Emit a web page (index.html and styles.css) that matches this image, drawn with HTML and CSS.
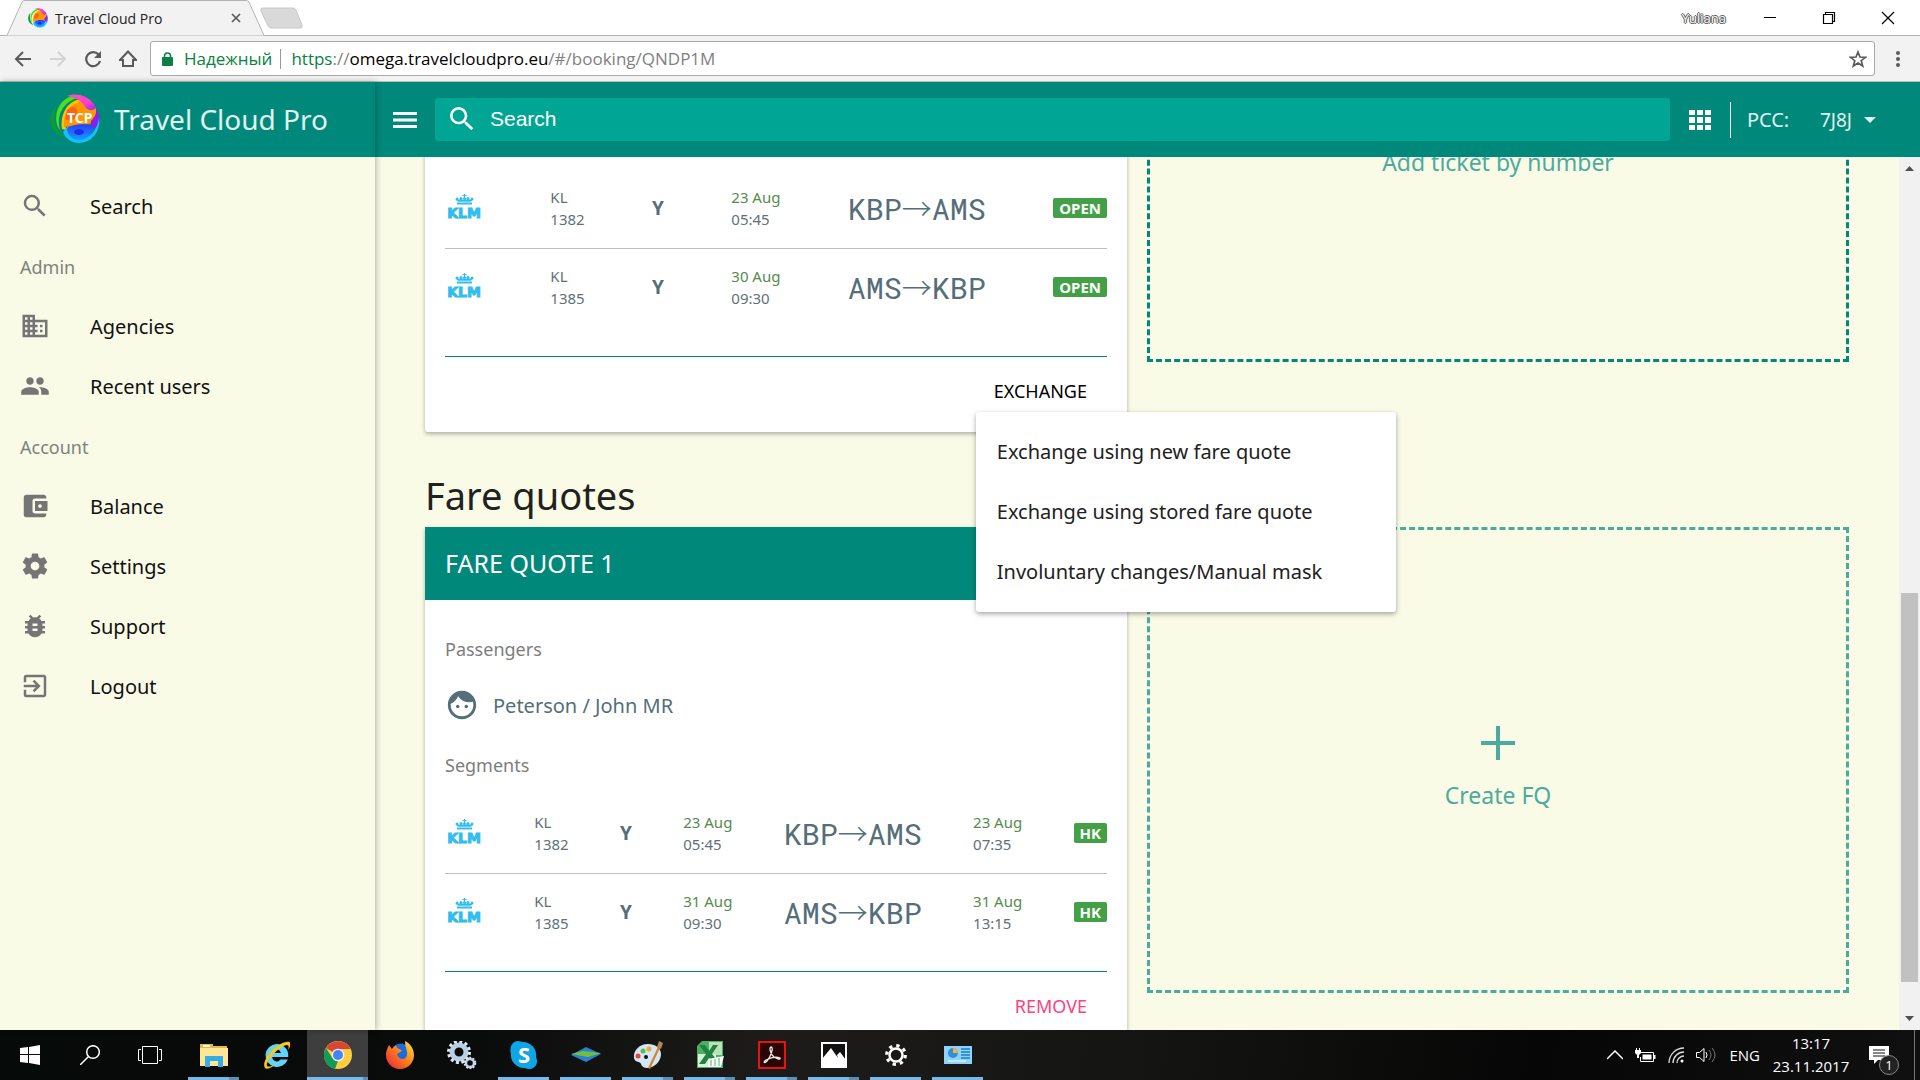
FILE: index.html
```html
<!DOCTYPE html>
<html lang="en">
<head>
<meta charset="utf-8">
<title>Travel Cloud Pro</title>
<link rel="stylesheet" href="styles.css">
</head>
<body>
<svg class="defs" aria-hidden="true">
  <defs>
    <linearGradient id="g-pink" x1="0" y1="0" x2="1" y2="1"><stop offset="0" stop-color="#ff4fb4"/><stop offset=".6" stop-color="#ff3fd0"/><stop offset="1" stop-color="#8a2df5"/></linearGradient>
    <linearGradient id="g-blue" x1="0" y1="0" x2="0" y2="1"><stop offset="0" stop-color="#2f3cff"/><stop offset="1" stop-color="#12a0ff"/></linearGradient>
    <linearGradient id="g-fox" x1="1" y1="0" x2="0" y2="1"><stop offset="0" stop-color="#ffe93c"/><stop offset=".5" stop-color="#ff7a1a"/><stop offset="1" stop-color="#e5203f"/></linearGradient>
    <symbol id="tcp" viewBox="0 0 50 50">
      <path d="M6 12C-3 22-2 38 14 43 6 36 3 26 6 12z" fill="#0c9a3a"/>
      <path d="M28 1C12 1 2 18 8 33l3 5C5 23 12 7 31 3z" fill="#4be01a"/>
      <path d="M30 5C17 8 10 20 12 35l4 1c-2-12 4-24 18-28z" fill="#ffc400"/>
      <path d="M32 8C19 9 13 21 14 33l32-4V14z" fill="#ff9500"/>
      <path d="M17 16c5-5 11-4 10 3s-7 9-12 6z" fill="#ff6210"/>
      <path d="M17 2c10-4 24 0 29 12-5 4-9 2-12-3-4-5-9-8-17-9z" fill="url(#g-pink)"/>
      <path d="M46 14c5 9 4 16 1 21-4-1-7-3-6-8 4-4 6-8 5-13z" fill="#8a1df0"/>
      <path d="M49 24c2 14-8 25-20 25-8 0-14-5-16-11l5-6c0 8 5 13 12 13 9 0 17-8 19-21z" fill="#14c0ff"/>
      <path d="M17 35c3-6 24-6 27-2-2 8-8 13-15 13-6 0-11-4-12-11z" fill="url(#g-blue)"/>
      <ellipse cx="29" cy="38" rx="5" ry="3" fill="#1b2ee8"/>
    </symbol>
    <symbol id="i-search" viewBox="0 0 24 24"><path d="M15.5 14h-.79l-.28-.27A6.47 6.47 0 0 0 16 9.5 6.5 6.5 0 1 0 9.500 16c1.610 0 3.090-.59 4.230-1.570l.27.28v.79l5 4.990L20.490 19l-4.990-5zm-6 0C7.010 14 5 11.990 5 9.500S7.010 5 9.500 5 14 7.010 14 9.500 11.990 14 9.500 14z"/></symbol>
    <symbol id="klm" viewBox="0 0 38 32">
      <g fill="#33bdee"><path d="M12 10.500h15v2H12zM11 7.500l2 2.300h13l2-2.300zM19 2h1v1h1.500v1H20v3h-1V4h-1.500V3H19z"/><circle cx="12" cy="7" r="1.500"/><circle cx="16" cy="6.500" r="1.500"/><circle cx="19.500" cy="6.500" r="1.500"/><circle cx="23" cy="6.500" r="1.500"/><circle cx="27" cy="7" r="1.500"/></g>
      <text x="19" y="26" text-anchor="middle" class="klm-text">KLM</text>
    </symbol>
  </defs>
</svg>

<div class="browser">
  <div class="tabstrip">
    <div class="tab">
      <svg class="tab-shape" viewBox="0 0 266 36" preserveAspectRatio="none"><path d="M0 35.500h7L22 2q1-1.500 3-1.500h221q2 0 3 1.500l15 33.500h2" fill="#f2f2f2" stroke="#b3b3b3"/></svg>
      <svg class="tab-icon"><use href="#tcp"/></svg>
      <span class="tab-title">Travel Cloud Pro</span>
      <button class="plain tab-close" aria-label="Close tab"><svg width="10" height="10" viewBox="0 0 10 10"><path d="M1 1l8 8M9 1l-8 8" stroke="#5a5a5a" stroke-width="1.700"/></svg></button>
    </div>
    <button class="plain new-tab" aria-label="New tab"><svg width="44" height="22" viewBox="0 0 44 22"><path d="M3 1h30q2 0 3 2l6 15q1 3-2 3H11q-2 0-3-2L1 4q-1-3 2-3z" fill="#d9d9d9" stroke="#c8c8c8"/></svg></button>
    <div class="window-buttons">
      <span class="profile">Yuliana</span>
      <button class="plain" aria-label="Minimize"><svg width="14" height="14"><path d="M1 6.500h12" stroke="#000"/></svg></button>
      <button class="plain" aria-label="Restore"><svg width="14" height="14" fill="none"><path d="M1.500 3.500h9v9h-9zM3.500 3.500v-2h9v9h-2" stroke="#000" stroke-width="1.200"/></svg></button>
      <button class="plain" aria-label="Close"><svg width="14" height="14"><path d="M1 1l12 12M13 1L1 13" stroke="#000" stroke-width="1.200"/></svg></button>
    </div>
  </div>
  <div class="toolbar">
    <button class="plain nav-btn" aria-label="Back"><svg width="18" height="18" fill="none" stroke="#5a5a5a" stroke-width="2"><path d="M17 9H2M9 2L2 9l7 7"/></svg></button>
    <button class="plain nav-btn" aria-label="Forward" disabled><svg width="18" height="18" fill="none" stroke="#d3d3d3" stroke-width="2"><path d="M1 9h15M9 2l7 7-7 7"/></svg></button>
    <button class="plain nav-btn" aria-label="Reload"><svg width="18" height="18"><path d="M14.500 4.500A7 7 0 1 0 16 11" fill="none" stroke="#5a5a5a" stroke-width="2.200"/><path d="M17 1v7h-7z" fill="#5a5a5a"/></svg></button>
    <button class="plain nav-btn" aria-label="Home"><svg width="18" height="18" fill="none" stroke="#5a5a5a" stroke-width="2"><path d="M1 10l8-8.500 8 8.500h-3v6H4v-6z"/></svg></button>
    <div class="omnibox">
      <svg class="lock" width="11" height="14" viewBox="0 0 11 14"><path d="M2.500 6V4a3 3 0 0 1 6 0v2" fill="none" stroke="#0b8043" stroke-width="1.500"/><rect y="5" width="11" height="9" rx="1" fill="#0b8043"/></svg>
      <span class="secure">Надежный</span>
      <span class="url"><span class="scheme">https</span>://<span class="host">omega.travelcloudpro.eu</span>/#/booking/QNDP1M</span>
      <button class="plain star" aria-label="Bookmark"><svg width="18" height="18" viewBox="0 0 18 18"><path d="M9 2l2 5 5.500.300-4.300 3.400 1.500 5.300L9 13l-4.700 3 1.500-5.300L1.500 7.300 7 7z" fill="none" stroke="#5a5a5a" stroke-width="1.700"/></svg></button>
    </div>
    <button class="plain kebab" aria-label="Menu"><svg width="4" height="18"><g fill="#5a5a5a"><circle cx="2" cy="3" r="2"/><circle cx="2" cy="9" r="2"/><circle cx="2" cy="15" r="2"/></g></svg></button>
  </div>
</div>

<div class="app">
  <aside class="sidebar">
    <div class="brand"><span class="brand-logo"><svg><use href="#tcp"/></svg><span class="brand-mark">TCP</span></span><span>Travel Cloud Pro</span></div>
    <nav class="menu">
      <a href="#search"><svg><use href="#i-search"/></svg>Search</a>
      <h2>Admin</h2>
      <a href="#agencies"><svg viewBox="0 0 24 24"><path d="M12 7V3H2v18h20V7H12zM6 19H4v-2h2v2zm0-4H4v-2h2v2zm0-4H4V9h2v2zm0-4H4V5h2v2zm4 12H8v-2h2v2zm0-4H8v-2h2v2zm0-4H8V9h2v2zm0-4H8V5h2v2zm10 12h-8v-2h2v-2h-2v-2h2v-2h-2V9h8v10zm-2-8h-2v2h2v-2zm0 4h-2v2h2v-2z"/></svg>Agencies</a>
      <a href="#users"><svg viewBox="0 0 24 24"><path d="M16 11c1.660 0 2.990-1.340 2.990-3S17.660 5 16 5s-3 1.340-3 3 1.340 3 3 3zm-8 0c1.660 0 2.990-1.340 2.990-3S9.660 5 8 5 5 6.340 5 8s1.340 3 3 3zm0 2c-2.330 0-7 1.170-7 3.500V19h14v-2.500C15 14.170 10.330 13 8 13zm8 0c-.29 0-.62.02-.97.05 1.160.84 1.970 1.970 1.970 3.450V19h6v-2.500c0-2.330-4.670-3.500-7-3.500z"/></svg>Recent users</a>
      <h2>Account</h2>
      <a href="#balance"><svg viewBox="0 0 24 24"><path d="M21 18v1c0 1.100-.9 2-2 2H5c-1.110 0-2-.9-2-2V5c0-1.100.89-2 2-2h14c1.100 0 2 .9 2 2v1h-9c-1.110 0-2 .9-2 2v8c0 1.100.89 2 2 2h9zm-9-2h10V8H12v8zm4-2.500c-.83 0-1.500-.67-1.500-1.500s.67-1.500 1.500-1.500 1.500.67 1.500 1.500-.67 1.500-1.500 1.500z"/></svg>Balance</a>
      <a href="#settings"><svg viewBox="0 0 24 24"><path d="M19.430 12.980c.04-.32.07-.64.07-.98s-.03-.66-.07-.98l2.110-1.650c.19-.15.24-.42.12-.64l-2-3.460c-.12-.22-.39-.3-.61-.22l-2.490 1c-.52-.4-1.080-.73-1.690-.98l-.38-2.650A.488.488 0 0 0 14 2h-4c-.25 0-.46.18-.49.42l-.38 2.650c-.61.25-1.170.59-1.690.98l-2.490-1c-.23-.09-.49 0-.61.22l-2 3.460c-.13.22-.07.49.12.64l2.110 1.650c-.04.32-.07.65-.07.98s.03.66.07.98l-2.110 1.650c-.19.15-.24.42-.12.64l2 3.460c.12.22.39.3.61.22l2.490-1c.52.4 1.080.73 1.690.98l.38 2.650c.03.24.24.42.49.42h4c.25 0 .46-.18.49-.42l.38-2.650c.61-.25 1.170-.59 1.690-.98l2.490 1c.23.09.49 0 .61-.22l2-3.460c.12-.22.07-.49-.12-.64l-2.110-1.650zM12 15.500c-1.930 0-3.500-1.570-3.500-3.500s1.570-3.500 3.500-3.500 3.500 1.570 3.500 3.500-1.570 3.500-3.500 3.500z"/></svg>Settings</a>
      <a href="#support"><svg viewBox="0 0 24 24"><path d="M20 8h-2.810c-.45-.78-1.070-1.450-1.820-1.960L17 4.410 15.590 3l-2.170 2.170C12.960 5.060 12.490 5 12 5c-.49 0-.96.06-1.410.17L8.410 3 7 4.410l1.620 1.630C7.880 6.550 7.260 7.220 6.810 8H4v2h2.090c-.05.33-.09.66-.09 1v1H4v2h2v1c0 .34.04.67.09 1H4v2h2.810c1.040 1.790 2.970 3 5.190 3s4.150-1.210 5.190-3H20v-2h-2.090c.05-.33.09-.66.09-1v-1h2v-2h-2v-1c0-.34-.04-.67-.09-1H20V8zm-6 8h-4v-2h4v2zm0-4h-4v-2h4v2z"/></svg>Support</a>
      <a href="#logout"><svg viewBox="0 0 24 24"><path d="M10.090 15.590L11.500 17l5-5-5-5-1.410 1.410L12.670 11H3v2h9.670l-2.580 2.590zM19 3H5a2 2 0 0 0-2 2v4h2V5h14v14H5v-4H3v4a2 2 0 0 0 2 2h14c1.100 0 2-.9 2-2V5c0-1.100-.9-2-2-2z"/></svg>Logout</a>
    </nav>
  </aside>

  <div class="page">
    <header class="appbar">
      <button class="plain" aria-label="Toggle menu"><svg width="24" height="16"><path d="M0 1.500h24M0 8h24M0 14.500h24" stroke="#fff" stroke-width="3"/></svg></button>
      <label class="searchbox"><svg><use href="#i-search"/></svg><input type="text" placeholder="Search" aria-label="Search"></label>
      <button class="plain" aria-label="Apps"><svg width="22" height="20" fill="#fff"><path d="M0 0h6v5H0zM8 0h6v5H8zM16 0h6v5h-6zM0 7h6v6H0zM8 7h6v6H8zM16 7h6v6h-6zM0 15h6v5H0zM8 15h6v5H8zM16 15h6v5h-6z"/></svg></button>
      <span class="divider"></span>
      <span class="pcc">PCC:</span>
      <button class="plain pcc-value">7J8J <svg width="12" height="6"><path d="M0 0h12L6 6z" fill="#e0f2ef"/></svg></button>
    </header>

    <div class="viewport">
      <main class="content">
        <section class="pair tickets">
          <article class="card ticket">
            <table class="segments">
              <tbody>
                <tr><td><svg class="klm"><use href="#klm"/></svg></td><td>KL<br>1382</td><td class="cls">Y</td><td><span class="date">23 Aug</span><br>05:45</td><td class="route">KBP<span class="arrow">→</span>AMS</td><td><span class="badge">OPEN</span></td></tr>
                <tr><td><svg class="klm"><use href="#klm"/></svg></td><td>KL<br>1385</td><td class="cls">Y</td><td><span class="date">30 Aug</span><br>09:30</td><td class="route">AMS<span class="arrow">→</span>KBP</td><td><span class="badge">OPEN</span></td></tr>
              </tbody>
            </table>
            <footer class="actions wide">
              <div class="dropdown">
                <button class="plain action" aria-expanded="true">EXCHANGE</button>
                <div class="popup" role="menu">
                  <button class="plain" role="menuitem">Exchange using new fare quote</button>
                  <button class="plain" role="menuitem">Exchange using stored fare quote</button>
                  <button class="plain" role="menuitem">Involuntary changes/Manual mask</button>
                </div>
              </div>
            </footer>
          </article>
          <button class="plain placeholder current"><svg width="34" height="34"><path d="M17 0v34M0 17h34" stroke="currentColor" stroke-width="4"/></svg>Add ticket by number</button>
        </section>

        <h1>Fare quotes</h1>
        <section class="pair">
          <article class="card">
            <h2 class="card-title">FARE QUOTE 1</h2>
            <div class="details">
              <h3>Passengers</h3>
              <p class="person"><svg viewBox="0 0 24 24"><path d="M9 11.750a1.250 1.250 0 1 0 0 2.500 1.250 1.250 0 0 0 0-2.500zm6 0a1.250 1.250 0 1 0 0 2.500 1.250 1.250 0 0 0 0-2.500zM12 2C6.480 2 2 6.480 2 12s4.480 10 10 10 10-4.480 10-10S17.520 2 12 2zm0 18c-4.410 0-8-3.590-8-8 0-.29.02-.58.05-.86 2.360-1.050 4.230-2.980 5.210-5.370a9.974 9.974 0 0 0 10.410 3.970c.21.71.33 1.470.33 2.260 0 4.410-3.590 8-8 8z"/></svg>Peterson / John MR</p>
              <h3>Segments</h3>
            </div>
            <table class="segments">
              <tbody>
                <tr><td><svg class="klm"><use href="#klm"/></svg></td><td>KL<br>1382</td><td class="cls">Y</td><td><span class="date">23 Aug</span><br>05:45</td><td class="route">KBP<span class="arrow">→</span>AMS</td><td><span class="date">23 Aug</span><br>07:35</td><td><span class="badge">HK</span></td></tr>
                <tr><td><svg class="klm"><use href="#klm"/></svg></td><td>KL<br>1385</td><td class="cls">Y</td><td><span class="date">31 Aug</span><br>09:30</td><td class="route">AMS<span class="arrow">→</span>KBP</td><td><span class="date">31 Aug</span><br>13:15</td><td><span class="badge">HK</span></td></tr>
              </tbody>
            </table>
            <footer class="actions"><button class="plain action remove">REMOVE</button></footer>
          </article>
          <button class="plain placeholder"><svg width="34" height="34"><path d="M17 0v34M0 17h34" stroke="currentColor" stroke-width="4"/></svg>Create FQ</button>
        </section>
      </main>
      <div class="scrollbar">
        <svg width="9" height="5"><path d="M0 5l4.500-5L9 5z" fill="#505050"/></svg>
        <div class="track"><div class="thumb"></div></div>
        <svg width="9" height="5"><path d="M0 0l4.500 5L9 0z" fill="#505050"/></svg>
      </div>
    </div>
  </div>
</div>

<div class="taskbar">
  <button class="plain sys" aria-label="Start"><svg width="20" height="20" fill="#fff"><path d="M0 3l8-1v7H0zM9 2l11-2v9H9zM0 10h8v8l-8-1zM9 10h11v10L9 18z"/></svg></button>
  <button class="plain sys" aria-label="Search"><svg width="20" height="20" fill="none" stroke="#fff" stroke-width="1.500"><circle cx="13" cy="7" r="6.300"/><path d="M8.500 11.500L0 20"/></svg></button>
  <button class="plain sys" aria-label="Task view"><svg width="24" height="20" fill="none" stroke="#fff"><path d="M4.500 1.500h15v17h-15zM3 4.500H.5v11H3M21 4.500h2.500v11H21"/></svg></button>
  <div class="apps">
    <button class="plain open many" aria-label="Explorer"><svg width="28" height="28" viewBox="0 0 28 28"><path d="M0 3h13v2h14v20H0z" fill="#e8b93f"/><path d="M0 7h28v18H0z" fill="#ffe694"/><path d="M3 4h7v2H3z" fill="#fff"/><path d="M5 15h18v11h-5v-6h-8v6H5z" fill="#35aee8"/></svg></button>
    <button class="plain" aria-label="Internet Explorer"><svg width="28" height="28" viewBox="0 0 28 28"><path d="M14.500 3a11.500 11.500 0 1 0 11.300 15.500H18.500a4.600 4.600 0 0 1-8.300-2.500h16A11.500 11.500 0 0 0 14.500 3zM10.200 12a4.400 4.400 0 0 1 8.600 0z" fill="#60d4fa"/><path d="M3 27C-2 20 17-1 27 1c3 1 1 5-1 8 1-3 1-5-1-5C18 4 3 21 5 25c3 2 9-2 11-4C12 26 5 29 3 27z" fill="#f9c71e"/></svg></button>
    <button class="plain open many active" aria-label="Chrome"><svg width="28" height="28" viewBox="0 0 28 28"><circle cx="14" cy="14" r="14" fill="#ffcd40"/><path d="M14 14L2 7A14 14 0 0 1 26.500 8H14z" fill="#db4437"/><path d="M2 7l7 11 5 2-3 8A14 14 0 0 1 2 7z" fill="#0f9d58"/><circle cx="14" cy="14" r="6.300" fill="#f1f1f1"/><circle cx="14" cy="14" r="5" fill="#4285f4"/></svg></button>
    <button class="plain" aria-label="Firefox"><svg width="28" height="28" viewBox="0 0 28 28"><circle cx="15" cy="13" r="10.500" fill="#1a6be0"/><path d="M3 4l3 4 4-4c0 4 5 4 6 6l-5 3c1 6 9 7 10 1 1-4-2-7-2-14 5 2 9 8 9 14a14 14 0 0 1-28 0C0 10 1 8 3 4z" fill="url(#g-fox)"/></svg></button>
    <button class="plain" aria-label="Services"><svg width="30" height="28" viewBox="0 0 30 28" fill="none"><circle cx="12" cy="11" r="7" stroke="#b9cfe4" stroke-width="5"/><circle cx="12" cy="11" r="10.500" stroke="#dce8f2" stroke-width="3" stroke-dasharray="3 2.500"/><circle cx="23" cy="22" r="4" stroke="#c5d6e6" stroke-width="2.500"/><circle cx="23" cy="22" r="5.500" stroke="#dce8f2" stroke-width="1.500" stroke-dasharray="2 1.500"/></svg></button>
    <button class="plain open" aria-label="Skype"><svg width="28" height="28" viewBox="0 0 28 28"><path d="M8 0c2 0 4 1 5 1a13 13 0 0 1 13 15c3 6-1 12-7 12-2 0-4-1-5-1A13 13 0 0 1 1 13C-1 7 2 0 8 0z" fill="#0fa5e6"/><text x="14" y="22" text-anchor="middle" class="skype-s">S</text></svg></button>
    <button class="plain open" aria-label="Layers"><svg width="30" height="16" viewBox="0 0 30 16"><path d="M15 0l15 7-15 8L0 8z" fill="#2c7fd1"/><path d="M0 7l12-3 18 2-13 4z" fill="#6fc13a"/></svg></button>
    <button class="plain open many" aria-label="Paint"><svg width="30" height="28" viewBox="0 0 30 28"><path d="M15 3C6 3 0 10 1 17c1 5 6 3 7 6 1 4 6 5 11 3 6-3 9-8 9-13 0-6-6-10-13-10z" fill="#d2e6f5"/><circle cx="5" cy="15" r="2.500" fill="#e24343"/><circle cx="10" cy="10" r="2.500" fill="#5fb94a"/><circle cx="16" cy="8" r="2.500" fill="#f5a623"/><circle cx="13" cy="16" r="2" fill="#111"/><path d="M25 6l2 1-10 21-2-1z" fill="#d9822b"/><path d="M24 6l2-6 4 2-2 6z" fill="#b58355"/></svg></button>
    <button class="plain open many" aria-label="Excel"><svg width="28" height="28" viewBox="0 0 28 28"><path d="M1 5l5-5h21v27H1z" fill="#4caf61"/><path d="M13 1h13v13H13z" fill="#b9e2b8"/><path d="M2 13h18v13H2z" fill="#d9efd9"/><path d="M3 4h6l4 6 4-6h5l-6 9 8 10h-6l-5-6-4 6H3l7-10z" fill="#1e8440"/><path d="M12 18l16-3-3 11H12z" fill="#fff"/><path d="M15 19v6M19 18v7M23 17v8" stroke="#4caf61"/></svg></button>
    <button class="plain open many" aria-label="Acrobat"><svg width="28" height="28" viewBox="0 0 28 28"><path d="M1 1h26v26H1z" fill="#2b0606" stroke="#e5160c" stroke-width="2"/><path d="M13 6c3 0 0 9-4 14-3 3-4 1-1-1 4-2 10-4 14-2 1 2-3 1-6-1-4-3-5-10-3-10z" fill="none" stroke="#eee" stroke-width="1.300"/></svg></button>
    <button class="plain open many" aria-label="Photos"><svg width="26" height="26" viewBox="0 0 26 26"><path d="M1 1h24v24H1z" fill="#111" stroke="#fff" stroke-width="2"/><path d="M1 17l9-11 7 10-1-3 3-3 6 8v7H1z" fill="#fff"/></svg></button>
    <button class="plain open" aria-label="Settings"><svg width="22" height="22" viewBox="0 0 22 22" fill="none" stroke="#fff"><circle cx="11" cy="11" r="6.500" stroke-width="2.500"/><circle cx="11" cy="11" r="9.300" stroke-width="3.200" stroke-dasharray="3.300 4"/></svg></button>
    <button class="plain open" aria-label="Control panel"><svg width="28" height="18" viewBox="0 0 28 18"><path d="M0 0h28v18H0z" fill="#8ed3f9"/><circle cx="9" cy="7" r="5" fill="#2f8fd8"/><path d="M9 7V2a5 5 0 0 1 5 5z" fill="#ffb03a"/><path d="M17 3h9M17 6h9M17 9h9M17 12h9" stroke="#1e7dc7" stroke-width="1.500"/><path d="M4 15h18" stroke="#fff"/></svg></button>
  </div>
  <div class="tray">
    <svg width="16" height="10" fill="none" stroke="#fff" stroke-width="1.500"><path d="M0 9l8-8 8 8"/></svg>
    <svg width="21" height="15" viewBox="0 0 21 15"><path d="M6 4.500h12.500v9H5.500V9" fill="none" stroke="#fff"/><path d="M7.500 6.500h9v5h-9z" fill="#fff"/><path d="M19 7h1.500v4H19zM0 2h6v3L4 7v3H2V7L0 5zM1 0h1v2H1zM4 0h1v2H4z" fill="#fff"/></svg>
    <svg width="16" height="16" viewBox="0 0 16 16" fill="none" stroke="#ddd" stroke-width="1.300"><path d="M1 16A15 15 0 0 1 16 1M5 16A11 11 0 0 1 16 5M9 16a7 7 0 0 1 7-7"/><circle cx="14" cy="14" r="1.500" fill="#fff" stroke="none"/></svg>
    <svg width="21" height="16" viewBox="0 0 21 16" fill="none" stroke="#fff"><path d="M.5 5.500h3L8 1.500v13L3.500 10.500h-3z"/><path d="M10 5q2 3 0 6" /><path d="M13 3q4 5 0 10M16 1q6 7 0 14" stroke="#777"/></svg>
    <span>ENG</span>
    <time class="clock">13:17<br>23.11.2017</time>
    <button class="plain notes" aria-label="Notifications"><svg width="20" height="18"><path d="M0 0h20v14H9l-4 4v-4H0z" fill="#fff"/><path d="M4 4h12M4 7h12M4 10h12" stroke="#111"/></svg><span class="count">1</span></button>
  </div>
</div>
</body>
</html>
```
FILE: styles.css
```css
* { box-sizing: border-box; }

body {
  margin: 0;
  height: 100vh;
  display: flex;
  flex-direction: column;
  overflow: hidden;
  font-family: "Noto Sans", sans-serif;
  font-size: 20px;
  color: #212121;
  background: #f9fbe7;
}

h1, h2, h3, p { margin: 0; font-weight: 400; }
svg { display: block; flex: none; }
.defs { position: absolute; width: 0; height: 0; }

.plain {
  border: 0;
  padding: 0;
  background: none;
  color: inherit;
  font: inherit;
  display: flex;
  align-items: center;
  justify-content: center;
}

/* Browser window */
.browser { flex: none; background: #f2f2f2; font-family: "Open Sans", sans-serif; }
.tabstrip {
  height: 36px;
  display: flex;
  background: #fff;
  border-bottom: 1px solid #b3b3b3;
}
.tab {
  position: relative;
  width: 266px;
  height: 36px;
  display: flex;
  align-items: center;
  padding: 0 25px 0 28px;
  font-size: 14px;
  color: #222;
}
.tab-shape { position: absolute; inset: 0; width: 100%; height: 100%; }
.tab-icon { position: relative; width: 20px; height: 20px; margin-right: 7px; }
.tab-title { position: relative; flex: 1; }
.tab-close { position: relative; }
.new-tab { margin-left: -6px; }
.window-buttons { margin-left: auto; padding-right: 3px; display: flex; align-items: center; }
.window-buttons button { width: 59px; height: 32px; }
.profile {
  margin-right: 14px;
  font-size: 13px;
  color: #fff;
  text-shadow: 1px 0 #555, -1px 0 #555, 0 1px #555, 0 -1px #555;
}
.toolbar {
  height: 46px;
  display: flex;
  align-items: center;
  padding: 0 20px 0 5px;
  border-bottom: 1px solid #bcbcbc;
}
.nav-btn { width: 35px; height: 35px; }
.omnibox {
  flex: 1;
  height: 35px;
  margin: 0 21px 0 5px;
  display: flex;
  align-items: center;
  padding: 0 7px 0 11px;
  background: #fff;
  border: 1px solid #a9a9a9;
  border-radius: 3px;
  font-size: 17px;
}
.secure {
  margin-left: 11px;
  padding-right: 8px;
  margin-right: 10px;
  line-height: 20px;
  color: #0b8043;
  border-right: 1px solid #999;
}
.url { flex: 1; color: #808080; }
.scheme { color: #0b8043; }
.host { color: #000; }

/* Application */
.app { flex: 1; min-height: 0; display: flex; }
.sidebar {
  position: relative;
  z-index: 1;
  width: 375px;
  flex: none;
  background: #f9fbe7;
  box-shadow: 1px 0 6px rgba(0, 0, 0, .3);
}
.brand {
  height: 75px;
  display: flex;
  align-items: center;
  gap: 14px;
  padding: 0 0 2px 50px;
  background: #00897b;
  color: #e0f2ef;
  font-size: 28px;
}
.brand-logo { position: relative; width: 50px; height: 50px; }
.brand-logo svg { width: 50px; height: 50px; }
.brand-mark {
  position: absolute;
  inset: 0;
  left: 17px;
  line-height: 48px;
  color: #fff;
  font-size: 14px;
  font-weight: 700;
}
.menu { padding-top: 20px; }
.menu a {
  height: 60px;
  display: flex;
  align-items: center;
  gap: 40px;
  padding: 0 0 2px 20px;
  color: #111;
  text-decoration: none;
}
.menu svg { width: 30px; height: 30px; fill: #757575; }
.menu h2 { padding-left: 20px; font-size: 18px; line-height: 60px; color: #80827a; }

.page { flex: 1; min-width: 0; display: flex; flex-direction: column; }
.appbar {
  height: 75px;
  flex: none;
  display: flex;
  align-items: center;
  padding: 0 44px 0 18px;
  background: #00897b;
  color: #e0f2ef;
}
.searchbox {
  flex: 1;
  height: 43px;
  margin: 0 19px 0 18px;
  display: flex;
  align-items: center;
  gap: 12px;
  padding: 0 0 2px 11px;
  border-radius: 3px;
  background: #00a594;
}
.searchbox svg { width: 32px; height: 32px; fill: #fff; }
.searchbox input {
  flex: 1;
  padding: 0;
  border: 0;
  background: none;
  outline: 0;
  font: 21px "Liberation Sans", sans-serif;
  color: #fff;
}
.searchbox input::placeholder { color: #fff; opacity: 1; }
.divider { width: 1px; height: 36px; margin: 0 16px 0 19px; background: #fff; }
.pcc { width: 73px; }
.pcc-value { gap: 12px; font-size: 19px; }

.viewport { flex: 1; min-height: 0; display: flex; }
.content { flex: 1; min-width: 0; padding: 0 50px; overflow: hidden; }
.scrollbar {
  width: 21px;
  display: flex;
  flex-direction: column;
  align-items: center;
  padding: 9px 0;
  background: #f1f1f1;
}
.track { flex: 1; width: 17px; display: flex; flex-direction: column; justify-content: flex-end; padding-bottom: 34px; }
.thumb { height: 48%; background: #c1c1c1; }

.pair { display: grid; grid-template-columns: 1fr 1fr; gap: 20px; align-items: start; }
/* the list is scrolled down, so its first row starts above the fold */
.tickets { margin-top: -265px; }
.card {
  min-width: 0;
  background: #fff;
  border-radius: 3px;
  box-shadow: 0 2px 4px rgba(0, 0, 0, .3);
}
.ticket { min-height: 540px; display: flex; flex-direction: column; justify-content: flex-end; }
.card-title { padding: 0 20px; line-height: 73px; font-size: 25px; color: #fff; background: #00897b; }
.details { padding: 21px 20px 2px; }
h1 { margin-top: 33px; padding-bottom: 2px; font-size: 38px; line-height: 60px; }
h3 { font-size: 18px; line-height: 56px; color: #7d7d7d; }
.person {
  height: 56px;
  margin-bottom: 4px;
  display: flex;
  align-items: center;
  gap: 14px;
  color: #546e7a;
}
.person svg { width: 34px; height: 34px; fill: #546e7a; }

.segments { display: block; padding: 0 20px; font-size: 15px; line-height: 22px; color: #5f7079; }
.segments tbody { display: block; }
.segments tr { height: 78px; display: flex; align-items: center; justify-content: space-between; }
.segments tr:first-child { height: 79px; border-bottom: 1px solid #bdbdbd; }
.segments td { padding: 0 0 2px; }
.klm { width: 38px; height: 32px; }
.klm-text { font: 700 14px "DejaVu Sans", sans-serif; fill: #33bdee; stroke: #33bdee; stroke-width: 1px; }
.segments .cls { font-size: 19px; font-weight: 700; color: #546e7a; }
.date { color: #558b4f; }
.segments .route { padding: 0; font: 30px/36px "Roboto Mono", "Liberation Mono", monospace; color: #546e7a; }
.arrow { font-family: "Noto Sans CJK SC", sans-serif; font-weight: 300; line-height: 30px; }
.badge {
  display: block;
  padding: 0 6px;
  border-radius: 2px;
  background: #43a047;
  color: #fff;
  font-weight: 700;
  line-height: 20px;
}
.actions {
  margin: 19px 20px 0;
  padding: 13px 0 20px;
  display: flex;
  justify-content: flex-end;
  border-top: 1px solid #00897b;
}
.actions.wide { margin-top: 29px; }
.action { height: 42px; padding: 0 20px 0 18px; font-size: 18px; color: #000; }
.remove { color: #ff4081; }
.dropdown { position: relative; }
.popup {
  position: absolute;
  z-index: 2;
  top: 100%;
  left: 0;
  width: 420px;
  padding: 9px 0 11px;
  background: #fff;
  border-radius: 3px;
  box-shadow: 0 2px 5px rgba(0, 0, 0, .35);
}
.popup button { width: 100%; height: 60px; padding: 0 21px; justify-content: flex-start; }

.placeholder {
  min-height: 466px;
  padding-top: 16px;
  flex-direction: column;
  gap: 19px;
  border: 3px dashed #4dab9e;
  color: #4dab9e;
  font-size: 23px;
}
.placeholder.current { min-height: 470px; border-color: #00897b; }

/* Desktop taskbar */
.taskbar {
  flex: none;
  height: 50px;
  display: flex;
  align-items: stretch;
  background: linear-gradient(100deg, #060a08, #0a0b0b 25%, #1d1c1a 40%, #141412 60%, #060606 80%, #101010);
  color: #fff;
  font-family: "Open Sans", sans-serif;
  font-size: 15px;
}
.sys { width: 60px; }
.apps { display: flex; gap: 1px; margin-left: 3px; }
.apps button { width: 61px; padding: 3px 5px 0; border-bottom: 3px solid transparent; background-clip: padding-box; }
.apps .open { background: linear-gradient(#76b9ed, #76b9ed) 5px 100% / 51px 3px no-repeat border-box; }
.apps .many { background: linear-gradient(90deg, #76b9ed 80%, #5b8fb9 80%) 5px 100% / 51px 3px no-repeat border-box; }
.apps .active { background: linear-gradient(90deg, #76b9ed 92%, #5b8fb9 92%) 0 100% / 61px 3px no-repeat border-box, #3e3e3e; }
.skype-s { font: 700 22px "Open Sans", sans-serif; fill: #fff; }
.tray { margin-left: auto; display: flex; align-items: center; gap: 12px; padding-right: 5px; }
.clock { width: 78px; margin-right: 7px; text-align: center; line-height: 23px; }
.notes { position: relative; width: 46px; height: 50px; justify-content: flex-start; border-right: 1px solid #777; }
.count {
  position: absolute;
  left: 10px;
  top: 25px;
  width: 20px;
  height: 20px;
  line-height: 18px;
  border: 1px solid #888;
  border-radius: 50%;
  background: #222;
  font-size: 13px;
}
```
